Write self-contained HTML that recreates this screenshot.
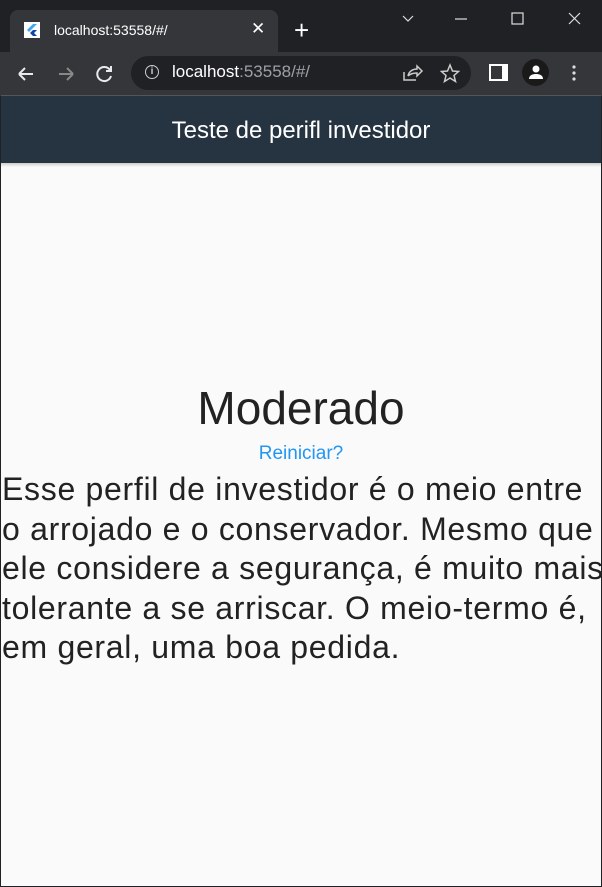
<!DOCTYPE html>
<html><head><style>
body{margin:0;width:602px;height:887px;overflow:hidden;background:#202124;font-family:"Liberation Sans",sans-serif;position:relative}
.a{position:absolute}
.t div{white-space:nowrap}
</style></head><body>
<div class="a" style="left:10px;top:10px;width:268px;height:44px;background:#35363a;border-radius:8px 8px 0 0"></div>
<div class="a" style="left:24px;top:22px;width:16px;height:16px;background:#fff"></div>
<svg class="a" style="left:24px;top:22px" width="16" height="16"><path d="M9 2L3 8l2 2 8-8z" fill="#42a5f5"/><path d="M9 8l-3 3 3 3h4l-3-3 3-3z" fill="#0d47a1"/></svg>
<div class="a" style="left:54px;top:22px;color:#fff;font-size:14px">localhost:53558/#/</div>
<div class="a" style="left:251px;top:19px;color:#fff;font-size:17px">✕</div>
<div class="a" style="left:294px;top:15px;color:#fff;font-size:26px;font-weight:300">+</div>
<svg class="a" style="left:400px;top:12px" width="190" height="14" stroke="#ddd" fill="none" stroke-width="1.2"><path d="M3 4l5 5 5-5"/><path d="M55 7h12"/><rect x="112" y="1" width="11" height="11"/><path d="M169 1l11 11M180 1l-11 11"/></svg>
<div class="a" style="left:0;top:52px;width:602px;height:44px;background:#35363a"></div>
<svg class="a" style="left:14px;top:62px" width="110" height="24" stroke="#e8eaed" fill="none" stroke-width="2"><path d="M5 12h14M5 12l6-6M5 12l6 6"/><path d="M45 12h14M59 12l-6-6M59 12l-6 6" stroke="#888"/><path d="M96 8a7 7 0 1 0 1 6"/><path d="M97 4v5h-5"/></svg>
<div class="a" style="left:131px;top:56px;width:340px;height:34px;background:#202124;border-radius:17px"></div>
<div class="a" style="left:145px;top:65px;width:12px;height:12px;border:1.5px solid #ccc;border-radius:50%;color:#ccc;font-size:10px;text-align:center;line-height:12px;font-weight:bold">i</div>
<div class="a" style="left:172px;top:62px;font-size:17px;color:#fff">localhost<span style="color:#9aa0a6">:53558/#/</span></div>
<svg class="a" style="left:400px;top:62px" width="64" height="22" stroke="#ccc" fill="none" stroke-width="1.5"><path d="M4 10v8h12M8 14c1-5 5-7 9-7V4l5 5-5 5v-3c-4 0-7 1-9 3"/><path d="M50 3l2.5 6 6 .5-4.5 4 1.5 6-5.5-3.5-5.5 3.5 1.5-6-4.5-4 6-.5z"/></svg>
<div class="a" style="left:489px;top:64px;width:11px;height:13px;border:2px solid #fff;border-right-width:6px;"></div>
<div class="a" style="left:522px;top:59px;width:27px;height:27px;background:#1a1a1a;border-radius:50%"></div>
<svg class="a" style="left:527px;top:63px" width="18" height="18" fill="#fff"><circle cx="9" cy="6" r="3.5"/><path d="M2 16c0-4 4-5 7-5s7 1 7 5z"/></svg>
<svg class="a" style="left:570px;top:64px" width="8" height="18" fill="#ddd"><circle cx="4" cy="3" r="1.6"/><circle cx="4" cy="9" r="1.6"/><circle cx="4" cy="15" r="1.6"/></svg>
<div class="a" style="left:1px;top:95px;width:600px;height:1px;background:#555"></div>
<div class="a" style="left:1px;top:96px;width:600px;height:67px;background:#263340;color:#fff;font-size:24px;text-align:center;line-height:70px">Teste de perifl investidor</div>
<div class="a" style="left:1px;top:163px;width:600px;height:723px;background:#fafafa"></div>
<div class="a" style="left:1px;top:163px;width:600px;height:4px;background:linear-gradient(#ccc,#fafafa)"></div>
<div class="a" style="left:0;top:378px;width:602px;text-align:center;font-size:46px;color:#222;line-height:60px">Moderado</div>
<div class="a" style="left:0;top:441px;width:602px;text-align:center;font-size:19px;color:#2196f3;line-height:26px">Reiniciar?</div>
<div class="a t" style="left:2px;top:470px;width:600px;font-size:32px;color:#222;line-height:39.5px;letter-spacing:0.7px">
<div>Esse perfil de investidor é o meio entre</div>
<div>o arrojado e o conservador. Mesmo que</div>
<div>ele considere a segurança, é muito mais</div>
<div>tolerante a se arriscar. O meio-termo é,</div>
<div>em geral, uma boa pedida.</div>
</div>
</body></html>
